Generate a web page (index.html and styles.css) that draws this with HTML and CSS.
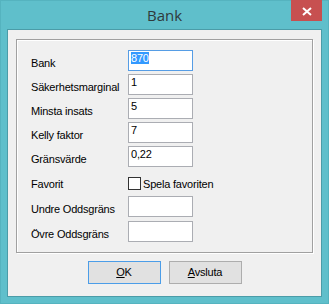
FILE: index.html
```html
<!DOCTYPE html>
<html>
<head>
<meta charset="utf-8">
<link rel="stylesheet" href="styles.css">
</head>
<body>
<div class="window">
  <div class="titlebar">
    <span class="spacer"></span>
    <span class="title">Bank</span>
    <div class="close"><svg width="10" height="9" viewBox="0 0 10 9"><path d="M1 1L9 8M9 1L1 8" stroke="#fff" stroke-width="2" fill="none"/></svg></div>
  </div>
  <div class="client">
    <div class="group">
      <div class="row"><span class="label">Bank</span><div class="textbox focused"><span class="sel">870</span></div></div>
      <div class="row"><span class="label">Säkerhetsmarginal</span><div class="textbox">1</div></div>
      <div class="row"><span class="label">Minsta insats</span><div class="textbox">5</div></div>
      <div class="row"><span class="label">Kelly faktor</span><div class="textbox">7</div></div>
      <div class="row"><span class="label">Gränsvärde</span><div class="textbox">0,22</div></div>
      <div class="row wide"><span class="label">Favorit</span><div class="check"><span class="box"></span><span class="checktext">Spela favoriten</span></div></div>
      <div class="row wide"><span class="label">Undre Oddsgräns</span><div class="textbox"></div></div>
      <div class="row wide"><span class="label">Övre Oddsgräns</span><div class="textbox"></div></div>
    </div>
    <div class="buttons">
      <button class="btn default"><u>O</u>K</button>
      <button class="btn"><u>A</u>vsluta</button>
    </div>
  </div>
</div>
</body>
</html>
```
FILE: styles.css
```css
html, body {
  margin: 0;
  padding: 0;
}
body {
  width: 329px;
  height: 304px;
  overflow: hidden;
  font-family: "Liberation Sans", Arial, sans-serif;
  font-size: 11px;
  letter-spacing: -0.2px;
  color: #000;
}
.window {
  box-sizing: border-box;
  width: 329px;
  height: 304px;
  background: #5fbfcb;
  border: 1px solid #55b3bf;
  display: flex;
  flex-direction: column;
}
.titlebar {
  height: 28px;
  display: grid;
  grid-template-columns: 1fr auto 1fr;
  flex: none;
}
.title {
  font-family: "Open Sans", "Noto Sans", sans-serif;
  font-size: 15px;
  line-height: 20px;
  letter-spacing: 0;
  color: #2f3a3b;
  margin-top: 4px;
  align-self: start;
}
.close {
  justify-self: end;
  align-self: start;
  width: 31px;
  height: 21px;
  margin-top: -1px;
  margin-right: 6px;
  background: #c75050;
  display: flex;
  align-items: center;
  justify-content: center;
  padding-top: 2px;
  box-sizing: border-box;
}
.close svg {
  display: block;
}
.client {
  flex: 1;
  margin: 0 6px 6px;
  border: 1px solid #4b9ca8;
  background: #f0f0f0;
  padding: 9px 8px 0;
  display: flex;
  flex-direction: column;
}
.group {
  border: 1px solid #a0a0a0;
  box-shadow: inset 1px 1px #fff, 1px 1px #fff;
  padding: 10px 0 10px 14px;
  display: flex;
  flex-direction: column;
  gap: 3px;
}
.row {
  display: flex;
  align-items: flex-start;
  height: 21px;
}
.row.wide {
  margin-top: 1px;
}
.label {
  width: 97px;
  flex: none;
  padding-top: 7px;
  line-height: 13px;
  white-space: nowrap;
}
.textbox {
  box-sizing: border-box;
  width: 65px;
  height: 21px;
  border: 1px solid #abadb3;
  background: #fff;
  padding: 1px 2px 0;
  line-height: 13px;
  white-space: nowrap;
}
.textbox.focused {
  border-color: #569de5;
}
.sel {
  background: #3399ff;
  color: #fff;
}
.check {
  display: flex;
  align-items: flex-start;
}
.box {
  box-sizing: border-box;
  width: 13px;
  height: 13px;
  margin-top: 6px;
  border: 1px solid #333;
  background: #fff;
  flex: none;
}
.checktext {
  margin-left: 2px;
  padding-top: 7px;
  line-height: 13px;
  white-space: nowrap;
}
.buttons {
  margin-top: 8px;
  display: flex;
  justify-content: center;
  gap: 8px;
}
.btn {
  box-sizing: border-box;
  width: 73px;
  height: 23px;
  border: 1px solid #adadad;
  background: #e1e1e1;
  font-family: "Liberation Sans", Arial, sans-serif;
  font-size: 11px;
  letter-spacing: -0.2px;
  color: #000;
  padding: 0;
  margin: 0;
  line-height: 13px;
}
.btn.default {
  border-color: #4b9de8;
}
.btn u {
  text-decoration: underline;
}
```
